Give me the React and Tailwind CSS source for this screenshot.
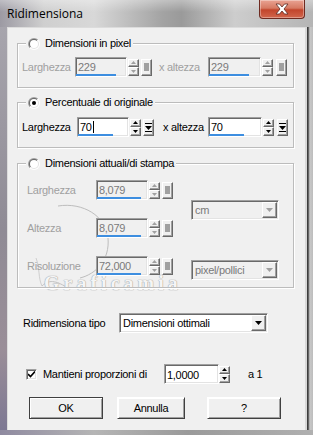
import React from "react";

const sunken =
  "border border-t-[#a0a0a0] border-l-[#a0a0a0] border-b-white border-r-white shadow-[inset_1px_1px_0_#696969,inset_-1px_-1px_0_#e3e3e3]";
const raised =
  "border border-t-white border-l-white border-b-[#696969] border-r-[#696969] shadow-[inset_-1px_-1px_0_#a0a0a0]";

function Field({ wClass, value, disabled, barClass, caret }) {
  return (
    <div
      className={`${wClass} h-[20px] flex flex-col ${sunken} ${
        disabled ? "bg-[#f0f0f0] text-[#7a7a7a]" : "bg-white text-black"
      }`}
    >
      <div className="flex-1 pl-[2px] pt-[1px] leading-[14px] flex items-center">
        <span>{value}</span>
        {caret && <span className="w-px h-[12px] bg-black ml-px" />}
      </div>
      {barClass && <div className={`h-[2px] ${barClass} bg-[#3d8ee0]`} />}
    </div>
  );
}

function Spin({ disabled }) {
  const c = disabled ? "#a0a0a0" : "#000";
  return (
    <div className="flex flex-col w-[11px] h-[17px]">
      <div className={`flex-1 flex items-center justify-center bg-[#f0f0f0] ${raised}`}>
        <svg width="5" height="3" viewBox="0 0 5 3">
          <path d="M2.5 0 L5 3 L0 3Z" fill={c} />
        </svg>
      </div>
      <div className={`flex-1 flex items-center justify-center bg-[#f0f0f0] ${raised}`}>
        <svg width="5" height="3" viewBox="0 0 5 3">
          <path d="M0 0 L5 0 L2.5 3Z" fill={c} />
        </svg>
      </div>
    </div>
  );
}

function Square({ disabled }) {
  return (
    <div className={`w-[11px] h-[17px] flex items-center justify-center bg-[#f0f0f0] ${raised}`}>
      {disabled ? (
        <div className="w-[5px] h-[8px] bg-[#a0a0a0]" />
      ) : (
        <svg width="7" height="9" viewBox="0 0 7 9">
          <rect x="0" y="0" width="7" height="1" fill="#000" />
          <path d="M0 3 L7 3 L3.5 7Z" fill="#000" />
          <rect x="0" y="8" width="7" height="1" fill="#000" />
        </svg>
      )}
    </div>
  );
}

function Radio({ checked }) {
  return (
    <div className="w-[12px] h-[12px] rounded-full bg-[linear-gradient(135deg,#a0a0a0_0%,#a0a0a0_50%,#ffffff_50%,#ffffff_100%)] p-px">
      <div className="w-full h-full rounded-full bg-[linear-gradient(135deg,#696969_0%,#696969_50%,#e3e3e3_50%,#e3e3e3_100%)] p-px">
        <div className="w-full h-full rounded-full bg-white flex items-center justify-center">
          {checked && <div className="w-[4px] h-[4px] rounded-full bg-black" />}
        </div>
      </div>
    </div>
  );
}

function Group({ hClass, legend, checked, children }) {
  return (
    <div
      className={`relative ${hClass} w-[277px] border border-[#bcbcbc] shadow-[inset_1px_1px_0_#ffffff,1px_1px_0_#ffffff]`}
    >
      <div className="absolute left-[8px] top-[-7px] flex items-center gap-[5px] bg-[#f0f0f0] px-[2px] text-black">
        <Radio checked={checked} />
        <span className="leading-[13px]">{legend}</span>
      </div>
      {children}
    </div>
  );
}

function Dropdown({ wClass, value, disabled }) {
  return (
    <div
      className={`${wClass} h-[20px] flex items-center ${sunken} ${
        disabled ? "bg-[#f0f0f0] text-[#7a7a7a]" : "bg-white text-black"
      }`}
    >
      <span className="flex-1 pl-[3px] leading-[14px]">{value}</span>
      <div className={`w-[15px] h-[16px] mr-px flex items-center justify-center bg-[#f0f0f0] ${raised}`}>
        <svg width="7" height="4" viewBox="0 0 7 4">
          <path d="M0 0 L7 0 L3.5 4Z" fill={disabled ? "#a0a0a0" : "#000"} />
        </svg>
      </div>
    </div>
  );
}

function Button({ wClass, children, isDefault }) {
  return (
    <div
      className={`${wClass} h-[22px] flex items-center justify-center bg-[#f0f0f0] border ${
        isDefault ? "border-[#404040]" : "border-t-white border-l-white border-b-[#404040] border-r-[#404040]"
      } shadow-[inset_1px_1px_0_#ffffff,inset_-1px_-1px_0_#a0a0a0]`}
    >
      <span className="leading-[14px]">{children}</span>
    </div>
  );
}

export default function App() {
  return (
    <div className="w-[313px] h-[435px] flex flex-col font-['Liberation_Sans',Arial,sans-serif] text-[11px] tracking-[-0.3px] text-black bg-[linear-gradient(90deg,#9c9aa3_0%,#cfcfcf_14%,#d8d8d8_30%,#a3a3a3_52%,#9a9a9a_58%,#cdcdcd_75%,#b5b5b5_100%)] overflow-hidden">
      {/* title bar */}
      <div className="h-[27px] flex items-start relative">
        <div className="absolute inset-x-0 top-0 h-[12px] bg-[linear-gradient(180deg,rgba(255,255,255,0.35),rgba(255,255,255,0))]" />
        <span className="relative pl-[7px] pt-[6px] text-[12px] leading-[15px] tracking-normal font-['Open_Sans',sans-serif] text-black">
          Ridimensiona
        </span>
        <div className="relative ml-auto mr-[8px] w-[46px] h-[19px] rounded-b-[4px] border border-t-0 border-[#6e2a20] bg-[linear-gradient(180deg,#e9a393_0%,#d67a63_45%,#c2452c_55%,#d1664c_100%)] flex items-center justify-center shadow-[inset_0_0_0_1px_rgba(255,255,255,0.35)]">
          <svg width="14" height="12" viewBox="0 0 14 12">
            <path
              d="M1 1 H4.5 L7 4 L9.5 1 H13 L9 6 L13 11 H9.5 L7 8 L4.5 11 H1 L5 6Z"
              fill="#ffffff"
              stroke="#5a2a22"
              strokeWidth="0.8"
            />
          </svg>
        </div>
      </div>

      <div className="flex h-[403px]">
        <div className="w-[7px] bg-[linear-gradient(180deg,#a7a5ad_0%,#8f8b95_50%,#9a8e98_80%,#7d7893_100%)]" />
        {/* client area */}
        <div className="relative w-[298px] h-[403px] bg-[#f0f0f0] border-l border-t border-[#dcdcdc] pl-[9px] pt-[15px] flex flex-col">
          {/* watermark */}
          <svg
            className="absolute left-[20px] top-[170px] pointer-events-none"
            width="100"
            height="110"
            viewBox="0 0 100 110"
          >
            <path
              d="M30 8 C55 4 78 18 80 40 C82 62 68 76 52 80"
              fill="none"
              stroke="#bdbdbd"
              strokeWidth="1"
            />
            <path d="M14 88 C22 80 30 84 40 90" fill="none" stroke="#c4c4c4" strokeWidth="1" />
            <path d="M8 60 C12 70 10 80 14 88" fill="none" stroke="#cfcfcf" strokeWidth="1" />
          </svg>
          <span className="absolute left-[36px] top-[245px] text-[20px] leading-[20px] font-bold tracking-[4px] font-['Liberation_Serif',serif] text-[#f5f5f5] [text-shadow:0_0_1px_#9c9c9c,0_0_1px_#9c9c9c] pointer-events-none">
            Graficamia
          </span>

          {/* group 1 */}
          <Group hClass="h-[45px]" legend="Dimensioni in pixel">
            <div className="flex items-center pl-[4px] pt-[13px] text-[#a0a0a0]">
              <span className="w-[53px]">Larghezza</span>
              <Field wClass="w-[52px]" value="229" disabled barClass="w-[40px]" />
              <div className="ml-px"><Spin disabled /></div>
              <div className="ml-[2px]"><Square disabled /></div>
              <span className="ml-[7px] w-[49px]">x altezza</span>
              <Field wClass="w-[53px]" value="229" disabled barClass="w-[40px]" />
              <div className="ml-px"><Spin disabled /></div>
              <div className="ml-[3px]"><Square disabled /></div>
            </div>
          </Group>

          <div className="h-[14px]" />

          {/* group 2 */}
          <Group hClass="h-[46px]" legend="Percentuale di originale" checked>
            <div className="flex items-center pl-[4px] pt-[14px]">
              <span className="w-[55px]">Larghezza</span>
              <Field wClass="w-[52px]" value="70" caret barClass="w-[35px]" />
              <div className="ml-px"><Spin /></div>
              <div className="ml-[2px]"><Square /></div>
              <span className="ml-[9px] w-[45px]">x altezza</span>
              <Field wClass="w-[54px]" value="70" barClass="w-[35px]" />
              <div className="ml-px"><Spin /></div>
              <div className="ml-[3px]"><Square /></div>
            </div>
          </Group>

          <div className="h-[15px]" />

          {/* group 3 */}
          <Group hClass="h-[125px]" legend="Dimensioni attuali/di stampa">
            <div className="flex pl-[9px] pt-[16px] text-[#a0a0a0]">
              <div className="flex flex-col gap-[18px]">
                {[
                  ["Larghezza", "8,079"],
                  ["Altezza", "8,079"],
                  ["Risoluzione", "72,000"],
                ].map(([l, v]) => (
                  <div key={l} className="flex items-center">
                    <span className="w-[69px]">{l}</span>
                    <Field wClass="w-[52px]" value={v} disabled barClass="w-[44px]" />
                    <div className="ml-px"><Spin disabled /></div>
                    <div className="ml-[2px]"><Square disabled /></div>
                  </div>
                ))}
              </div>
              <div className="ml-[18px] flex flex-col">
                <div className="mt-[20px]">
                  <Dropdown wClass="w-[88px]" value="cm" disabled />
                </div>
                <div className="mt-[40px]">
                  <Dropdown wClass="w-[88px]" value="pixel/pollici" disabled />
                </div>
              </div>
            </div>
          </Group>

          {/* resize type */}
          <div className="flex items-center mt-[25px] pl-[6px]">
            <span className="w-[96px]">Ridimensiona tipo</span>
            <Dropdown wClass="w-[149px]" value="Dimensioni ottimali" />
          </div>

          {/* keep proportions */}
          <div className="flex items-center mt-[31px] pl-[9px]">
            <div className={`w-[11px] h-[11px] bg-white flex items-center justify-center ${sunken}`}>
              <svg width="7" height="7" viewBox="0 0 7 7">
                <path d="M0 3 L2.5 5.5 L7 0.5" fill="none" stroke="#000" strokeWidth="1.6" />
              </svg>
            </div>
            <span className="ml-[6px] w-[121px]">Mantieni proporzioni di</span>
            <Field wClass="w-[55px]" value="1,0000" />
            <div><Spin /></div>
            <span className="ml-[18px]">a 1</span>
          </div>

          {/* buttons */}
          <div className="flex items-center mt-[13px] pl-[12px]">
            <Button wClass="w-[74px]" isDefault>OK</Button>
            <div className="ml-[14px]"><Button wClass="w-[68px]">Annulla</Button></div>
            <div className="ml-[22px]"><Button wClass="w-[74px]">?</Button></div>
          </div>
        </div>
        <div className="w-[8px] bg-[linear-gradient(90deg,#d8d8d8_0%,#d8d8d8_20%,#3a3a3a_30%,#6a6a6a_45%,#c8c8c8_60%,#bdbdbd_100%)]" />
      </div>
      <div className="h-[5px] bg-[linear-gradient(90deg,#8f8aa0,#b5b5b5_30%,#9a9a9a_60%,#b0b0b0)]" />
    </div>
  );
}
